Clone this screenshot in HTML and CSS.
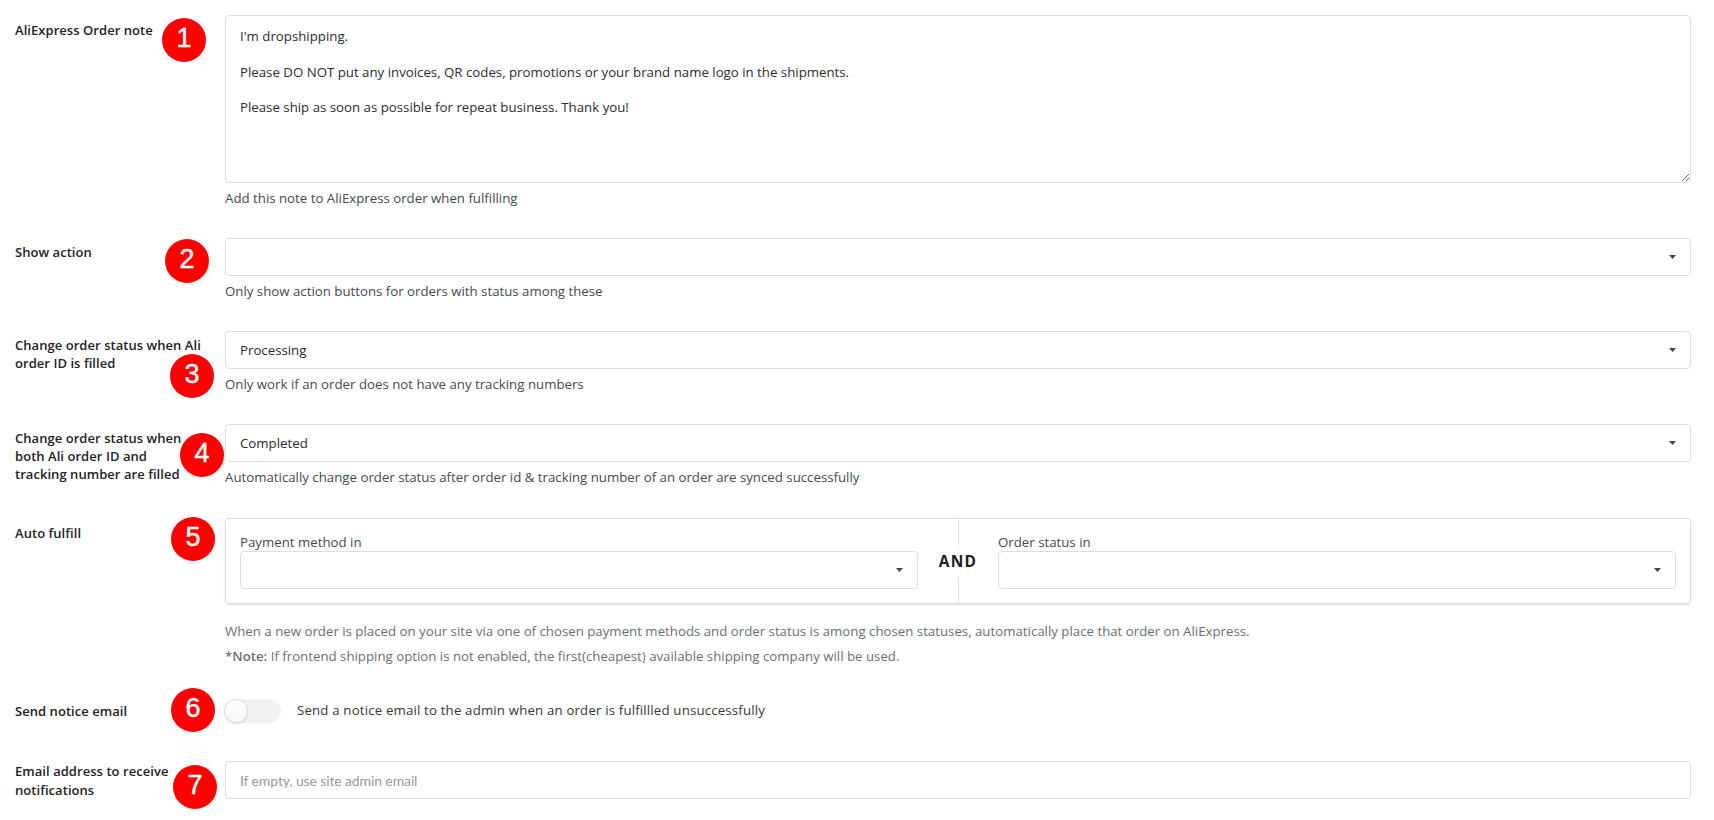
FILE: index.html
```html
<!DOCTYPE html>
<html lang="en">
<head>
<meta charset="utf-8">
<title>AliExpress fulfillment settings</title>
<link rel="stylesheet" href="styles.css">
</head>
<body>
<form class="settings">
  <div class="row">
    <div class="label">AliExpress Order note<span class="badge badge-1">1</span></div>
    <div class="field">
      <textarea class="note" spellcheck="false">I'm dropshipping.

Please DO NOT put any invoices, QR codes, promotions or your brand name logo in the shipments.

Please ship as soon as possible for repeat business. Thank you!</textarea>
      <p class="help">Add this note to AliExpress order when fulfilling</p>
    </div>
  </div>

  <div class="row">
    <div class="label label-select">Show action<span class="badge badge-2">2</span></div>
    <div class="field">
      <div class="select"><span></span><svg class="caret" viewBox="0 0 7 4"><path d="M0 0h7L3.5 4z"/></svg></div>
      <p class="help">Only show action buttons for orders with status among these</p>
    </div>
  </div>

  <div class="row">
    <div class="label label-select">Change order status when Ali<br>order ID is filled<span class="badge badge-3">3</span></div>
    <div class="field">
      <div class="select"><span>Processing</span><svg class="caret" viewBox="0 0 7 4"><path d="M0 0h7L3.5 4z"/></svg></div>
      <p class="help">Only work if an order does not have any tracking numbers</p>
    </div>
  </div>

  <div class="row">
    <div class="label label-select">Change order status when<br>both Ali order ID and<br>tracking number are filled<span class="badge badge-4">4</span></div>
    <div class="field">
      <div class="select"><span>Completed</span><svg class="caret" viewBox="0 0 7 4"><path d="M0 0h7L3.5 4z"/></svg></div>
      <p class="help">Automatically change order status after order id &amp; tracking number of an order are synced successfully</p>
    </div>
  </div>

  <div class="row row-fulfill">
    <div class="label">Auto fulfill<span class="badge badge-5">5</span></div>
    <div class="field">
      <div class="segment">
        <div class="condition">
          <div>Payment method in</div>
          <div class="select"><span></span><svg class="caret" viewBox="0 0 7 4"><path d="M0 0h7L3.5 4z"/></svg></div>
        </div>
        <div class="divider">AND</div>
        <div class="condition">
          <div>Order status in</div>
          <div class="select"><span></span><svg class="caret" viewBox="0 0 7 4"><path d="M0 0h7L3.5 4z"/></svg></div>
        </div>
      </div>
      <p class="description">When a new order is placed on your site via one of chosen payment methods and order status is among chosen statuses, automatically place that order on AliExpress.</p>
      <p class="description remark"><strong>*Note:</strong> If frontend shipping option is not enabled, the first(cheapest) available shipping company will be used.</p>
    </div>
  </div>

  <div class="row">
    <div class="label">Send notice email<span class="badge badge-6">6</span></div>
    <div class="field switch-line">
      <span class="toggle"><span class="knob"></span></span>
      <span class="switch-text">Send a notice email to the admin when an order is fulfillled unsuccessfully</span>
    </div>
  </div>

  <div class="row">
    <div class="label label-email">Email address to receive<br>notifications<span class="badge badge-7">7</span></div>
    <div class="field">
      <input class="email" type="text" placeholder="If empty, use site admin email">
    </div>
  </div>
</form>
</body>
</html>
```
FILE: styles.css
```css
* { box-sizing: border-box; }
body {
  margin: 0;
  background: #fff;
  color: #444b52;
  font: 13.25px/18px "Open Sans", "Noto Sans", sans-serif;
}
p { margin: 0; }

.settings {
  display: flex;
  flex-direction: column;
  gap: 31px;
  min-height: 820px;
  padding: 15px 23px 0 15px;
}
.row {
  display: grid;
  grid-template-columns: 210px 1fr;
  align-items: start;
}
.row-fulfill { margin-top: 1px; }
.label {
  position: relative;
  padding-top: 6px;
  color: #1d2327;
  font-size: 13px;
  font-weight: 600;
  letter-spacing: .05px;
  white-space: nowrap;
}
.label-select { padding-top: 5px; }
.label-email { padding-top: 1px; line-height: 19px; }

/* numbered markers over the label column */
.badge {
  position: absolute;
  width: 44px;
  height: 44px;
  border-radius: 50%;
  background: #f00;
  color: #fff;
  font: 27px/41px "Liberation Sans", Arial, sans-serif;
  letter-spacing: 0;
  text-align: center;
  -webkit-text-stroke: .4px #fff;
}
.badge-1 { left: 147px; top: 3px; }
.badge-2 { left: 150px; top: 1px; }
.badge-3 { left: 155px; top: 23px; }
.badge-4 { left: 165px; top: 9px; }
.badge-5 { left: 156px; top: -1px; }
.badge-6 { left: 156px; top: -8px; }
.badge-7 { left: 158px; top: 4px; }

.note {
  display: block;
  width: 100%;
  height: 168px;
  margin: 0;
  padding: 12px 14px 11px;
  border: 1px solid #dedede;
  border-radius: 4px;
  outline: 0;
  color: #2b2d31;
  font: inherit;
  line-height: 17.8px;
  resize: vertical;
}
.help { margin-top: 6px; }
.select {
  display: flex;
  align-items: center;
  justify-content: space-between;
  height: 38px;
  padding: 0 14px;
  border: 1px solid #dedede;
  border-radius: 4px;
  background: #fff;
  color: #2a2a2a;
}
.caret {
  width: 7px;
  height: 4px;
  fill: #444;
}
.segment {
  display: grid;
  grid-template-columns: 1fr 80px 1fr;
  height: 86px;
  padding: 14px;
  border: 1px solid #dcdddd;
  border-radius: 4px;
  box-shadow: 0 1px 2px rgba(34, 36, 38, .15);
}
.divider {
  display: flex;
  flex-direction: column;
  align-items: center;
  margin: -14px 0;
  color: #212121;
  font-size: 15.5px;
  font-weight: 700;
  letter-spacing: 1.3px;
  line-height: 32px;
}
.divider::before,
.divider::after {
  content: "";
  flex: 1;
  width: 1px;
  background: #dedede;
}
.description {
  margin-top: 18px;
  color: #6a6f76;
}
.remark { margin-top: 7px; }
.description strong { font-weight: 600; }

.switch-line {
  display: flex;
  align-items: center;
  padding: 3px 0 7px;
}
.toggle {
  width: 56px;
  height: 24px;
  border-radius: 12px;
  background: #f2f2f2;
}
.knob {
  display: block;
  width: 24px;
  height: 24px;
  margin-left: -1px;
  border: 1px solid #dcdcdd;
  border-radius: 50%;
  background: linear-gradient(#fff, #f6f6f6);
  box-shadow: 0 1px 2px rgba(34, 36, 38, .15);
}
.switch-text {
  margin: -2px 0 0 16px;
  color: #383838;
  letter-spacing: .165px;
}
.email {
  display: block;
  width: 100%;
  height: 38px;
  margin: 0;
  padding: 0 14px;
  border: 1px solid #dedede;
  border-radius: 4px;
  outline: 0;
  font: 14px/18px Lato, sans-serif;
  letter-spacing: -.12px;
}
.email::placeholder { color: #999; opacity: 1; }
```
